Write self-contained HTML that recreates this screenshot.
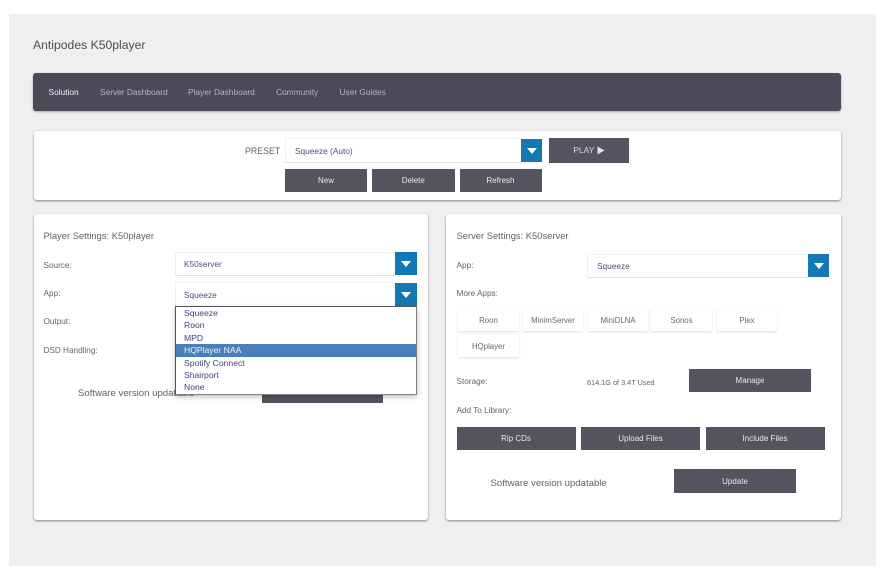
<!DOCTYPE html>
<html>
<head>
<meta charset="utf-8">
<style>
html,body{margin:0;padding:0;background:#fff;}
body{width:890px;height:570px;position:relative;overflow:hidden;font-family:"Liberation Sans",sans-serif;font-size:9.5px;color:#555;}
#p{position:absolute;left:0;top:0;width:890px;height:570px;filter:blur(.3px);}
.a,.t,.b,.s,.ab,.w,.card{position:absolute;box-sizing:border-box;}
.t{white-space:nowrap;line-height:12px;color:#626266;}
.l{font-size:8.2px;}
.n{font-size:8.35px;color:#b4b4bc;top:85.5px;}
.card{background:#fff;border-radius:3px;box-shadow:0 1px 2px rgba(0,0,0,.45);}
.b{background:#55535f;color:#e8e8ec;text-align:center;display:flex;align-items:center;justify-content:center;font-size:8px;}
.w{background:#fff;color:#6a6a6e;text-align:center;display:flex;align-items:center;justify-content:center;font-size:7.8px;box-shadow:0 1px 2px rgba(0,0,0,.14);border-radius:1px;}
.s{background:#fff;border:1px solid #f0f0f0;border-bottom-color:#e0e0e0;color:#4e4e78;font-size:8.3px;padding-left:9px;display:flex;align-items:center;}
.ab{background:#1279b4;}
.ab:after{content:"";position:absolute;left:50%;top:50%;margin-left:-5px;margin-top:-2.5px;border-left:5px solid transparent;border-right:5px solid transparent;border-top:6px solid #fff;}
.o{height:12.4px;line-height:12.4px;padding-left:8.5px;color:#42427a;font-size:8.6px;white-space:nowrap;}
</style>
</head>
<body>
<div id="p">
<div class="a" style="left:9px;top:14px;width:867px;height:552px;background:#efefef;"></div>

<div class="t" style="left:33px;top:38px;font-size:12.2px;line-height:14px;color:#4d4d50;">Antipodes K50player</div>

<div class="a" style="left:33px;top:73px;width:808px;height:37.5px;background:#4b4a59;border-radius:3px;box-shadow:0 1px 2px rgba(0,0,0,.3);"></div>
<div class="t n" style="left:48.5px;color:#f0f0f2;">Solution</div>
<div class="t n" style="left:100px;">Server Dashboard</div>
<div class="t n" style="left:188px;">Player Dashboard</div>
<div class="t n" style="left:276px;">Community</div>
<div class="t n" style="left:339.5px;">User Guides</div>

<div class="card" style="left:33.5px;top:131px;width:807.5px;height:69px;"></div>
<div class="t" style="left:245px;top:144.5px;font-size:8.8px;">PRESET</div>
<div class="s" style="left:285px;top:138px;width:237px;height:25px;">Squeeze (Auto)</div>
<div class="ab" style="left:521px;top:139px;width:21px;height:23px;"></div>
<div class="b" style="left:549px;top:138px;width:80px;height:24.5px;font-size:8.5px;color:#d8d8de;">PLAY&nbsp;<svg width="8" height="9" viewBox="0 0 8 9"><path d="M0.5 0.5 L7.5 4.5 L0.5 8.5 Z" fill="#e4e4e8"/></svg></div>
<div class="b" style="left:285px;top:169px;width:82px;height:23px;">New</div>
<div class="b" style="left:372px;top:169px;width:82.5px;height:23px;">Delete</div>
<div class="b" style="left:459.5px;top:169px;width:82px;height:23px;">Refresh</div>

<!-- Left card -->
<div class="card" style="left:33.5px;top:214px;width:394.5px;height:306px;"></div>
<div class="t" style="left:43.5px;top:230px;font-size:9.4px;">Player Settings: K50player</div>
<div class="t l" style="left:43.5px;top:259.5px;">Source:</div>
<div class="t l" style="left:43.5px;top:287.5px;">App:</div>
<div class="t l" style="left:43.5px;top:316px;">Output:</div>
<div class="t l" style="left:43.5px;top:344.5px;">DSD Handling:</div>

<div class="s" style="left:175px;top:251.5px;width:221px;height:24px;padding-left:8px;">K50server</div>
<div class="ab" style="left:395px;top:252px;width:22px;height:23px;"></div>
<div class="s" style="left:175px;top:282px;width:221px;height:25px;padding-left:8px;">Squeeze</div>
<div class="ab" style="left:395px;top:282.5px;width:22px;height:24px;"></div>

<div class="t" style="left:78px;top:388px;font-size:9.6px;">Software version updatable</div>
<div class="b" style="left:262px;top:385px;width:121px;height:18px;"></div>

<div class="a" style="left:174.5px;top:306px;width:242.5px;height:88.5px;background:#fff;border:1px solid #808080;border-top-color:#555;border-left-color:#555;box-shadow:0 2px 5px rgba(0,0,0,.25);">
  <div class="o">Squeeze</div>
  <div class="o">Roon</div>
  <div class="o">MPD</div>
  <div class="o" style="background:#4a80ba;color:#eef2f8;">HQPlayer NAA</div>
  <div class="o">Spotify Connect</div>
  <div class="o">Shairport</div>
  <div class="o">None</div>
</div>

<!-- Right card -->
<div class="card" style="left:446px;top:214px;width:395px;height:306px;"></div>
<div class="t" style="left:456.5px;top:230px;font-size:9.4px;">Server Settings: K50server</div>
<div class="t l" style="left:456.5px;top:259.5px;">App:</div>
<div class="s" style="left:587px;top:254px;width:222px;height:24px;padding-left:9px;">Squeeze</div>
<div class="ab" style="left:808px;top:254px;width:21px;height:23px;"></div>
<div class="t l" style="left:456.5px;top:287.5px;">More Apps:</div>
<div class="w" style="left:458px;top:309px;width:61px;height:22px;">Roon</div>
<div class="w" style="left:523px;top:309px;width:60px;height:22px;">MinimServer</div>
<div class="w" style="left:588px;top:309px;width:60px;height:22px;">MiniDLNA</div>
<div class="w" style="left:651px;top:309px;width:61px;height:22px;">Sonos</div>
<div class="w" style="left:717px;top:309px;width:60px;height:22px;">Plex</div>
<div class="w" style="left:458px;top:335px;width:61px;height:22px;">HQplayer</div>
<div class="t l" style="left:456.5px;top:375.5px;">Storage:</div>
<div class="t" style="left:587px;top:376.5px;font-size:7.3px;">614.1G of 3.4T Used</div>
<div class="b" style="left:689px;top:369px;width:122px;height:23px;">Manage</div>
<div class="t l" style="left:456.5px;top:405px;">Add To Library:</div>
<div class="b" style="left:456.5px;top:427px;width:119px;height:23px;">Rip CDs</div>
<div class="b" style="left:581px;top:427px;width:119px;height:23px;">Upload Files</div>
<div class="b" style="left:705.5px;top:427px;width:119px;height:23px;">Include Files</div>
<div class="t" style="left:490.5px;top:478px;font-size:9.6px;">Software version updatable</div>
<div class="b" style="left:674px;top:469px;width:122px;height:24px;">Update</div>
</div>
</body>
</html>
